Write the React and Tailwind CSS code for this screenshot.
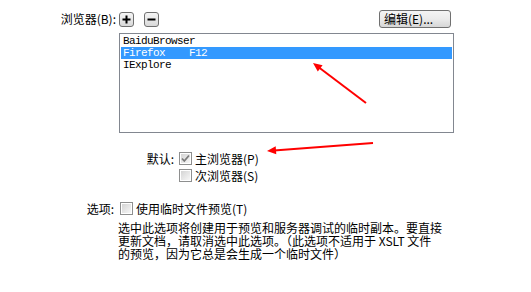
import React from 'react';

const Checkbox = ({ checked = false }) => (
  <div className="w-[13px] h-[13px] shrink-0 border border-[#8e8f8f] bg-white p-[1px]">
    <div className="w-full h-full bg-linear-to-br from-[#d4d4d4] to-[#f7f7f7] flex items-center justify-center">
      {checked && (
        <svg width="9" height="9" viewBox="0 0 9 9">
          <path d="M1 4.5 L3.3 7 L8 1.5" fill="none" stroke="#7b7b7b" strokeWidth="1.8" />
        </svg>
      )}
    </div>
  </div>
);

const SmallButton = ({ children, className = '' }) => (
  <div
    className={`w-[15px] h-[15px] rounded-[3px] border border-[#707070] bg-linear-to-b from-[#f6f6f6] to-[#d9d9d9] flex items-center justify-center ${className}`}
  >
    {children}
  </div>
);

const browsers = [
  { id: 'baidu', label: 'BaiduBrowser' },
  { id: 'firefox', label: 'Firefox    F12', selected: true },
  { id: 'ie', label: 'IExplore' },
];

export default function App() {
  return (
    <div className="w-[531px] h-[292px] bg-white relative overflow-hidden text-[12px] leading-[12px] text-black font-['Noto_Sans_CJK_SC',sans-serif]">
      {/* Browser row */}
      <div className="flex items-center mt-[10px] h-[18px]">
        <div className="w-[116px] text-right">浏览器(B):</div>
        <SmallButton className="ml-[3px]">
          <svg width="9" height="9" viewBox="0 0 9 9">
            <path d="M4.5 0.5 V8.5 M0.5 4.5 H8.5" stroke="#000" strokeWidth="2" />
          </svg>
        </SmallButton>
        <SmallButton className="ml-[10px]">
          <svg width="9" height="9" viewBox="0 0 9 9">
            <path d="M0.5 4.5 H8.5" stroke="#000" strokeWidth="2" />
          </svg>
        </SmallButton>
        <div className="ml-[220px] w-[72px] h-[18px] rounded-[3px] border border-[#707070] bg-linear-to-b from-[#f4f4f4] via-[#ebebeb] to-[#d6d6d6] flex items-center pl-[4px]">
          编辑(E)...
        </div>
      </div>

      {/* Browser list */}
      <div className="mt-[5px] ml-[119px] w-[335px] h-[100px] border border-[#828790] p-[1px]">
        {browsers.map((b) => (
          <div
            key={b.id}
            className={`h-[12px] pl-[2px] whitespace-pre font-['Liberation_Mono',monospace] text-[11px] leading-[12px] tracking-[-0.6px] ${
              b.selected ? 'bg-[#3399ff] text-white' : ''
            }`}
          >
            {b.label}
          </div>
        ))}
      </div>

      {/* Default */}
      <div className="mt-[19px] flex items-center h-[13px]">
        <div className="w-[174px] text-right">默认:</div>
        <div className="ml-[5px]">
          <Checkbox checked />
        </div>
        <div className="ml-[3px]">主浏览器(P)</div>
      </div>
      <div className="mt-[4px] flex items-center h-[13px] pl-[179px]">
        <Checkbox />
        <div className="ml-[3px]">次浏览器(S)</div>
      </div>

      {/* Options */}
      <div className="mt-[20px] flex items-center h-[13px]">
        <div className="w-[114px] text-right">选项:</div>
        <div className="ml-[6px]">
          <Checkbox />
        </div>
        <div className="ml-[3px]">使用临时文件预览(T)</div>
      </div>
      <div className="mt-[6px] ml-[118px] leading-[13px]">
        <div>选中此选项将创建用于预览和服务器调试的临时副本。要直接</div>
        <div>更新文档，请取消选中此选项。（此选项不适用于 XSLT 文件</div>
        <div>的预览，因为它总是会生成一个临时文件）</div>
      </div>

      {/* Annotation arrows */}
      <svg className="absolute inset-0 pointer-events-none" width="531" height="292">
        <line x1="366" y1="103" x2="319" y2="67.5" stroke="#ff0000" strokeWidth="2" />
        <polygon points="313,63 322.6,65.2 317.8,71.6" fill="#ff0000" />
        <line x1="373" y1="143" x2="274" y2="150.5" stroke="#ff0000" strokeWidth="2" />
        <polygon points="267,151 276.3,154.3 275.7,146.3" fill="#ff0000" />
      </svg>
    </div>
  );
}
